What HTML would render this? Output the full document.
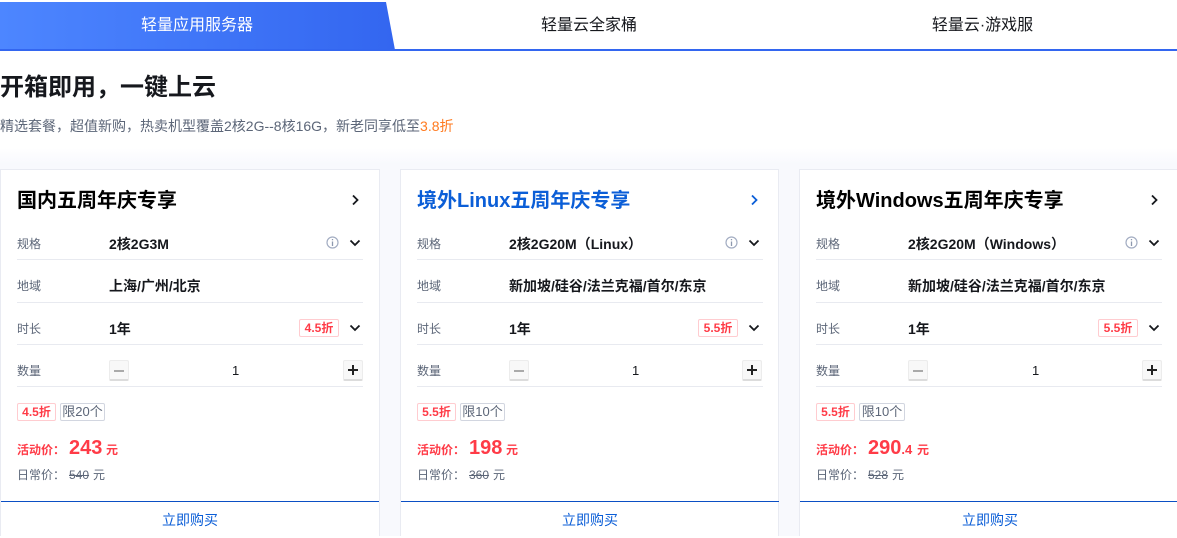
<!DOCTYPE html>
<html lang="zh-CN"><head><meta charset="utf-8"><title>轻量应用服务器</title>
<style>
*{box-sizing:border-box}
html,body{margin:0;padding:0}
body{width:1177px;height:536px;overflow:hidden;background:#fff;position:relative;font-family:"Liberation Sans","Noto Sans CJK SC",sans-serif;color:#000}
.a{position:absolute;white-space:nowrap}
.tab{top:2px;height:47px;line-height:47px;font-size:16px;text-align:center}
.grad{position:absolute;left:0;top:2px;width:395px;height:48px;background:linear-gradient(90deg,#4d86ff,#3366f0);clip-path:polygon(0 0,386px 0,395px 100%,0 100%)}
.glow{position:absolute;left:0;top:148px;width:1177px;height:388px;background:linear-gradient(#fff,#f8f9fd 16px)}
.card{position:absolute;top:169px;height:367px;width:379px;background:#fff;border:1px solid #e9ebf2;border-bottom:0}
.card .a{margin-left:-1px;margin-top:-170px}
.t{top:187px;left:17px;font-size:20px;line-height:28px;font-weight:700}
.l{left:17px;font-size:12px;line-height:18px;color:#5c6678}
.v{left:109px;font-size:14px;line-height:18px;font-weight:700;color:#16181d}
.h{left:17px;width:346px;height:1px;background:#e8eaf0}
.b{height:18px;line-height:16px;font-size:12px;font-weight:700;color:#ff3b47;border:1px solid #ffccd0;border-radius:2px;text-align:center;background:#fff}
.g{height:18px;line-height:16px;font-size:13px;color:#5c6678;border:1px solid #d2d6e0;border-radius:2px;text-align:center}
.q{top:360px;width:20px;height:21px;background:#f8f8f8;border:1px solid #ececec;border-bottom:2px solid #dcdcdc;border-radius:2px}
svg.a{display:block}
.buy{left:1px;width:378px;top:501px;height:35px;border-top:1px solid #0b4fc4;text-align:center;font-size:14px;line-height:36px;color:#0b5ed7}
.y{margin-left:4px}
</style></head><body>
<div class="glow"></div>
<div class="grad"></div>
<div class="a" style="left:0;top:49px;width:1177px;height:2px;background:#3366f0"></div>
<div class="a tab" style="left:0;width:394px;color:#fff">轻量应用服务器</div>
<div class="a tab" style="left:393px;width:392px;color:#16181d">轻量云全家桶</div>
<div class="a tab" style="left:787px;width:391px;color:#16181d">轻量云·游戏服</div>
<div class="a" style="left:0;top:71px;font-size:24px;line-height:34px;font-weight:700;color:#16181d">开箱即用，一键上云</div>
<div class="a" style="left:0;top:116px;font-size:14px;line-height:20px;color:#5c6678">精选套餐，超值新购，热卖机型覆盖2核2G--8核16G，新老同享低至<span style="color:#ff7a1f">3.8折</span></div>

<div class="card" style="left:0;width:380px">
<div class="a t">国内五周年庆专享</div>
<svg class="a" style="left:350px;top:194px" width="11" height="12" viewBox="0 0 11 12"><path d="M3 1.500 7.500 6 3 10.500" fill="none" stroke="#16181d" stroke-width="1.800"/></svg>
<div class="a l" style="top:235px">规格</div><div class="a v" style="top:235px">2核2G3M</div>
<svg class="a" style="left:326px;top:236px" width="13" height="13" viewBox="0 0 13 13"><circle cx="6.500" cy="6.500" r="5.500" fill="none" stroke="#a3adc2" stroke-width="1.200"/><path d="M6.500 3v1.300M6.500 5.500V10" stroke="#8d98ae" stroke-width="1.300"/></svg>
<svg class="a" style="left:349px;top:239px" width="12" height="9" viewBox="0 0 12 9"><path d="M1.500 1.500 6 6l4.500-4.500" fill="none" stroke="#16181d" stroke-width="1.800"/></svg>
<div class="a h" style="top:259px"></div>
<div class="a l" style="top:277px">地域</div><div class="a v" style="top:277px">上海/广州/北京</div>
<div class="a h" style="top:302px"></div>
<div class="a l" style="top:320px">时长</div><div class="a v" style="top:320px">1年</div>
<div class="a b" style="left:299px;top:319px;width:40px">4.5折</div>
<svg class="a" style="left:349px;top:324px" width="12" height="9" viewBox="0 0 12 9"><path d="M1.500 1.500 6 6l4.500-4.500" fill="none" stroke="#16181d" stroke-width="1.800"/></svg>
<div class="a h" style="top:344px"></div>
<div class="a l" style="top:362px">数量</div>
<div class="a q" style="left:109px"></div><div class="a" style="left:114px;top:370px;width:10px;height:2px;background:#aaa"></div>
<div class="a" style="left:232px;top:362px;font-size:13px;line-height:18px;color:#16181d">1</div>
<div class="a q" style="left:343px"></div><div class="a" style="left:348px;top:369px;width:10px;height:2px;background:#222"></div><div class="a" style="left:352px;top:365px;width:2px;height:10px;background:#222"></div>
<div class="a h" style="top:386px"></div>
<div class="a b" style="left:17px;top:403px;width:39px">4.5折</div>
<div class="a g" style="left:60px;top:403px;width:45px">限20个</div>
<div class="a" style="left:17px;top:441px;font-size:12px;line-height:18px;font-weight:700;color:#ff3b47">活动价：</div>
<div class="a" style="left:69px;top:434px;font-size:20px;line-height:28px;font-weight:700;color:#ff3b47">243</div>
<div class="a" style="left:106px;top:441px;font-size:12px;line-height:18px;font-weight:700;color:#ff3b47">元</div>
<div class="a l" style="top:466px">日常价：</div>
<div class="a l" style="left:69px;top:466px"><s>540</s><span class="y">元</span></div>
<div class="a buy">立即购买</div>
</div>

<div class="card" style="left:400px;width:379px">
<div class="a t" style="color:#0b5ed7">境外Linux五周年庆专享</div>
<svg class="a" style="left:349px;top:194px" width="11" height="12" viewBox="0 0 11 12"><path d="M3 1.500 7.500 6 3 10.500" fill="none" stroke="#0b5ed7" stroke-width="1.800"/></svg>
<div class="a l" style="top:235px">规格</div><div class="a v" style="top:235px">2核2G20M（Linux）</div>
<svg class="a" style="left:325px;top:236px" width="13" height="13" viewBox="0 0 13 13"><circle cx="6.500" cy="6.500" r="5.500" fill="none" stroke="#a3adc2" stroke-width="1.200"/><path d="M6.500 3v1.300M6.500 5.500V10" stroke="#8d98ae" stroke-width="1.300"/></svg>
<svg class="a" style="left:348px;top:239px" width="12" height="9" viewBox="0 0 12 9"><path d="M1.500 1.500 6 6l4.500-4.500" fill="none" stroke="#16181d" stroke-width="1.800"/></svg>
<div class="a h" style="top:259px"></div>
<div class="a l" style="top:277px">地域</div><div class="a v" style="top:277px">新加坡/硅谷/法兰克福/首尔/东京</div>
<div class="a h" style="top:302px"></div>
<div class="a l" style="top:320px">时长</div><div class="a v" style="top:320px">1年</div>
<div class="a b" style="left:298px;top:319px;width:40px">5.5折</div>
<svg class="a" style="left:348px;top:324px" width="12" height="9" viewBox="0 0 12 9"><path d="M1.500 1.500 6 6l4.500-4.500" fill="none" stroke="#16181d" stroke-width="1.800"/></svg>
<div class="a h" style="top:344px"></div>
<div class="a l" style="top:362px">数量</div>
<div class="a q" style="left:109px"></div><div class="a" style="left:114px;top:370px;width:10px;height:2px;background:#aaa"></div>
<div class="a" style="left:232px;top:362px;font-size:13px;line-height:18px;color:#16181d">1</div>
<div class="a q" style="left:342px"></div><div class="a" style="left:347px;top:369px;width:10px;height:2px;background:#222"></div><div class="a" style="left:351px;top:365px;width:2px;height:10px;background:#222"></div>
<div class="a h" style="top:386px"></div>
<div class="a b" style="left:17px;top:403px;width:39px">5.5折</div>
<div class="a g" style="left:60px;top:403px;width:45px">限10个</div>
<div class="a" style="left:17px;top:441px;font-size:12px;line-height:18px;font-weight:700;color:#ff3b47">活动价：</div>
<div class="a" style="left:69px;top:434px;font-size:20px;line-height:28px;font-weight:700;color:#ff3b47">198</div>
<div class="a" style="left:106px;top:441px;font-size:12px;line-height:18px;font-weight:700;color:#ff3b47">元</div>
<div class="a l" style="top:466px">日常价：</div>
<div class="a l" style="left:69px;top:466px"><s>360</s><span class="y">元</span></div>
<div class="a buy">立即购买</div>
</div>

<div class="card" style="left:799px;width:380px">
<div class="a t">境外Windows五周年庆专享</div>
<svg class="a" style="left:350px;top:194px" width="11" height="12" viewBox="0 0 11 12"><path d="M3 1.500 7.500 6 3 10.500" fill="none" stroke="#16181d" stroke-width="1.800"/></svg>
<div class="a l" style="top:235px">规格</div><div class="a v" style="top:235px">2核2G20M（Windows）</div>
<svg class="a" style="left:326px;top:236px" width="13" height="13" viewBox="0 0 13 13"><circle cx="6.500" cy="6.500" r="5.500" fill="none" stroke="#a3adc2" stroke-width="1.200"/><path d="M6.500 3v1.300M6.500 5.500V10" stroke="#8d98ae" stroke-width="1.300"/></svg>
<svg class="a" style="left:349px;top:239px" width="12" height="9" viewBox="0 0 12 9"><path d="M1.500 1.500 6 6l4.500-4.500" fill="none" stroke="#16181d" stroke-width="1.800"/></svg>
<div class="a h" style="top:259px"></div>
<div class="a l" style="top:277px">地域</div><div class="a v" style="top:277px">新加坡/硅谷/法兰克福/首尔/东京</div>
<div class="a h" style="top:302px"></div>
<div class="a l" style="top:320px">时长</div><div class="a v" style="top:320px">1年</div>
<div class="a b" style="left:299px;top:319px;width:40px">5.5折</div>
<svg class="a" style="left:349px;top:324px" width="12" height="9" viewBox="0 0 12 9"><path d="M1.500 1.500 6 6l4.500-4.500" fill="none" stroke="#16181d" stroke-width="1.800"/></svg>
<div class="a h" style="top:344px"></div>
<div class="a l" style="top:362px">数量</div>
<div class="a q" style="left:109px"></div><div class="a" style="left:114px;top:370px;width:10px;height:2px;background:#aaa"></div>
<div class="a" style="left:233px;top:362px;font-size:13px;line-height:18px;color:#16181d">1</div>
<div class="a q" style="left:343px"></div><div class="a" style="left:348px;top:369px;width:10px;height:2px;background:#222"></div><div class="a" style="left:352px;top:365px;width:2px;height:10px;background:#222"></div>
<div class="a h" style="top:386px"></div>
<div class="a b" style="left:17px;top:403px;width:39px">5.5折</div>
<div class="a g" style="left:60px;top:403px;width:46px">限10个</div>
<div class="a" style="left:17px;top:441px;font-size:12px;line-height:18px;font-weight:700;color:#ff3b47">活动价：</div>
<div class="a" style="left:69px;top:434px;font-size:20px;line-height:28px;font-weight:700;color:#ff3b47">290<span style="font-size:13px">.4</span></div>
<div class="a" style="left:118px;top:441px;font-size:12px;line-height:18px;font-weight:700;color:#ff3b47">元</div>
<div class="a l" style="top:466px">日常价：</div>
<div class="a l" style="left:69px;top:466px"><s>528</s><span class="y">元</span></div>
<div class="a buy" style="width:380px">立即购买</div>
</div>
</body></html>
